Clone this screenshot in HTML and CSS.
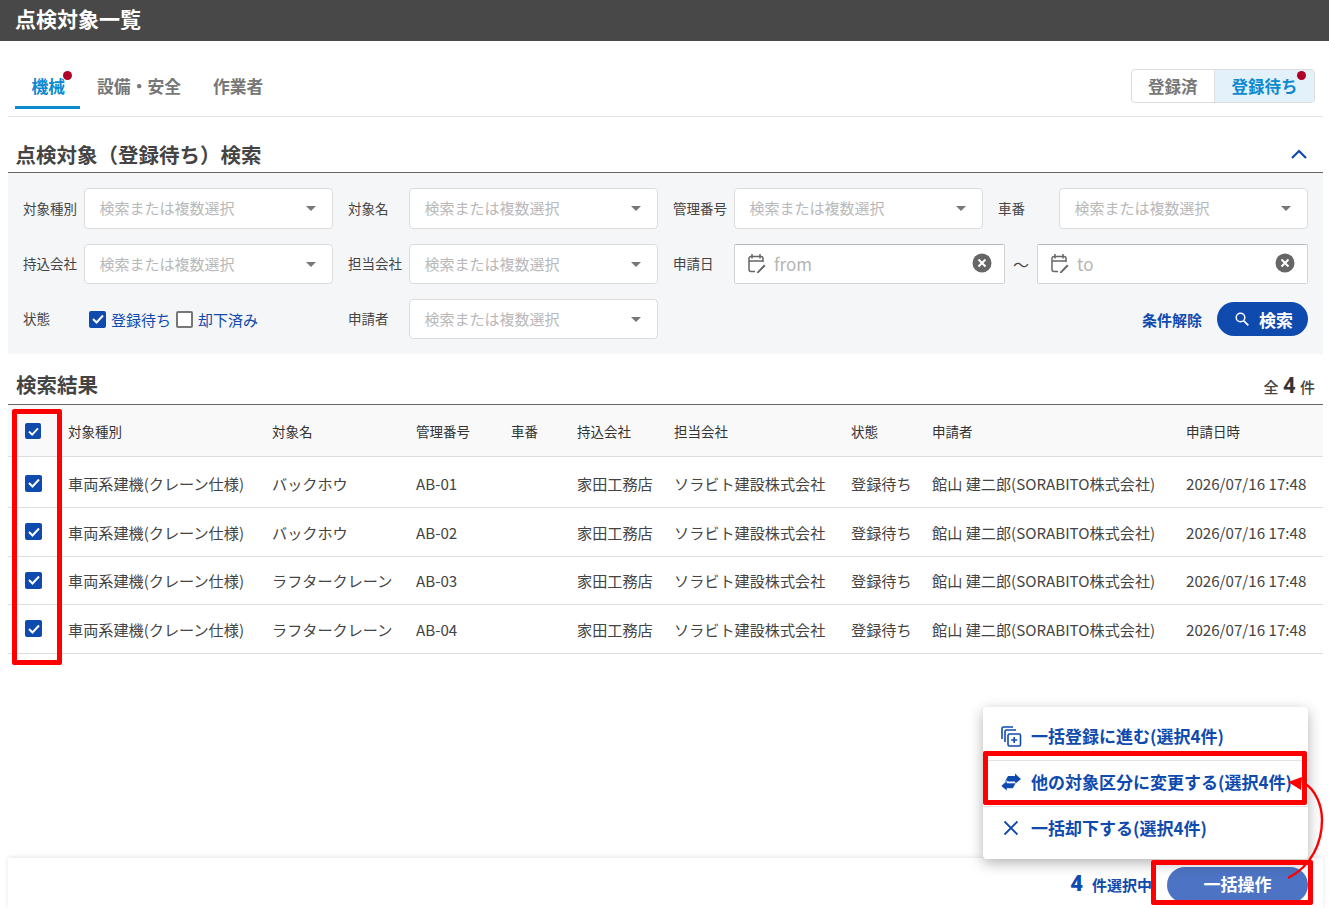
FILE: index.html
```html
<!DOCTYPE html>
<html lang="ja">
<head>
    <meta charset="UTF-8">
    <meta name="viewport" content="width=device-width, initial-scale=1.0">
    <title>点検対象一覧</title>
    <link rel="stylesheet" href="styles.css">
</head>
<body>
    <header class="page-header">点検対象一覧</header>

    <main class="content">
        <div class="tabs-row">
            <nav class="tabs">
                <a class="tab tab-active">機械<span class="dot dot-tab"></span></a>
                <a class="tab">設備・安全</a>
                <a class="tab">作業者</a>
            </nav>
            <div class="segment">
                <span class="segment-item">登録済</span>
                <span class="segment-item segment-active">登録待ち<span class="dot dot-segment"></span></span>
            </div>
        </div>

        <div class="section-head">
            <h2>点検対象（登録待ち）検索</h2>
            <svg class="chevron" width="18" height="10" viewBox="0 0 18 10"><path d="M2 9l7-7 7 7" fill="none" stroke="#0f4aaf" stroke-width="2.2"/></svg>
        </div>

        <section class="filters">
            <div class="field"><label>対象種別</label><div class="select">検索または複数選択<i class="caret"></i></div></div>
            <div class="field"><label>対象名</label><div class="select">検索または複数選択<i class="caret"></i></div></div>
            <div class="field"><label>管理番号</label><div class="select">検索または複数選択<i class="caret"></i></div></div>
            <div class="field"><label>車番</label><div class="select">検索または複数選択<i class="caret"></i></div></div>

            <div class="field"><label>持込会社</label><div class="select">検索または複数選択<i class="caret"></i></div></div>
            <div class="field"><label>担当会社</label><div class="select">検索または複数選択<i class="caret"></i></div></div>
            <div class="field field-wide">
                <label>申請日</label>
                <div class="date">
                    <svg class="cal" width="20" height="21" viewBox="0 0 20 21"><path d="M5 1v4.500M13 1v4.500M8 18.500H4a2 2 0 0 1-2-2V5.500a2 2 0 0 1 2-2h10a2 2 0 0 1 2 2V9M2 8h14" fill="none" stroke="#666" stroke-width="1.5"/><path d="M10 19l7-7.500 1.500 1.500-7 7H10z" fill="#666"/></svg>
                    <span class="date-text">from</span>
                    <svg class="clear" width="20" height="20" viewBox="0 0 20 20"><circle cx="10" cy="10" r="9.5" fill="#666"/><path d="M6.500 6.500l7 7M13.500 6.500l-7 7" stroke="#fff" stroke-width="2"/></svg>
                </div>
                <span class="tilde">〜</span>
                <div class="date">
                    <svg class="cal" width="20" height="21" viewBox="0 0 20 21"><path d="M5 1v4.500M13 1v4.500M8 18.500H4a2 2 0 0 1-2-2V5.500a2 2 0 0 1 2-2h10a2 2 0 0 1 2 2V9M2 8h14" fill="none" stroke="#666" stroke-width="1.5"/><path d="M10 19l7-7.500 1.500 1.500-7 7H10z" fill="#666"/></svg>
                    <span class="date-text">to</span>
                    <svg class="clear" width="20" height="20" viewBox="0 0 20 20"><circle cx="10" cy="10" r="9.5" fill="#666"/><path d="M6.500 6.500l7 7M13.500 6.500l-7 7" stroke="#fff" stroke-width="2"/></svg>
                </div>
            </div>

            <div class="field">
                <label>状態</label>
                <div class="checks">
                    <span class="check-item"><span class="box box-on"><svg width="12" height="10" viewBox="0 0 12 10"><path d="M1 5l3.500 3.500L11 1.500" fill="none" stroke="#fff" stroke-width="2"/></svg></span>登録待ち</span>
                    <span class="check-item"><span class="box box-off"></span>却下済み</span>
                </div>
            </div>
            <div class="field"><label>申請者</label><div class="select">検索または複数選択<i class="caret"></i></div></div>
            <div class="filter-actions">
                <a class="reset">条件解除</a>
                <button class="search-btn">
                    <svg width="16" height="16" viewBox="0 0 16 16"><circle cx="6.500" cy="6.500" r="4.300" fill="none" stroke="#fff" stroke-width="1.5"/><path d="M9.800 9.800l4.500 4.500" stroke="#fff" stroke-width="1.8"/></svg>
                    検索
                </button>
            </div>
        </section>

        <div class="result-head">
            <h2>検索結果</h2>
            <div class="total">全 <b>4</b> 件</div>
        </div>

        <table class="result-table">
            <colgroup>
                <col class="c-check"><col class="c-type"><col class="c-name"><col class="c-no"><col class="c-car">
                <col class="c-bring"><col class="c-owner"><col class="c-state"><col class="c-user"><col class="c-date">
            </colgroup>
            <thead>
                <tr>
                    <th class="check-cell"><span class="box box-on box-small"><svg width="11" height="9" viewBox="0 0 12 10"><path d="M1 5l3.500 3.500L11 1.500" fill="none" stroke="#fff" stroke-width="2"/></svg></span></th>
                    <th>対象種別</th><th>対象名</th><th>管理番号</th><th>車番</th><th>持込会社</th><th>担当会社</th><th>状態</th><th>申請者</th><th>申請日時</th>
                </tr>
            </thead>
            <tbody>
                <tr class="row-first">
                    <td class="check-cell"><span class="box box-on"><svg width="12" height="10" viewBox="0 0 12 10"><path d="M1 5l3.500 3.500L11 1.500" fill="none" stroke="#fff" stroke-width="2"/></svg></span></td>
                    <td>車両系建機(クレーン仕様)</td><td>バックホウ</td><td>AB-01</td><td></td><td>家田工務店</td><td>ソラビト建設株式会社</td><td>登録待ち</td><td>館山 建二郎(SORABITO株式会社)</td><td>2026/07/16 17:48</td>
                </tr>
                <tr>
                    <td class="check-cell"><span class="box box-on"><svg width="12" height="10" viewBox="0 0 12 10"><path d="M1 5l3.500 3.500L11 1.500" fill="none" stroke="#fff" stroke-width="2"/></svg></span></td>
                    <td>車両系建機(クレーン仕様)</td><td>バックホウ</td><td>AB-02</td><td></td><td>家田工務店</td><td>ソラビト建設株式会社</td><td>登録待ち</td><td>館山 建二郎(SORABITO株式会社)</td><td>2026/07/16 17:48</td>
                </tr>
                <tr>
                    <td class="check-cell"><span class="box box-on"><svg width="12" height="10" viewBox="0 0 12 10"><path d="M1 5l3.500 3.500L11 1.500" fill="none" stroke="#fff" stroke-width="2"/></svg></span></td>
                    <td>車両系建機(クレーン仕様)</td><td>ラフタークレーン</td><td>AB-03</td><td></td><td>家田工務店</td><td>ソラビト建設株式会社</td><td>登録待ち</td><td>館山 建二郎(SORABITO株式会社)</td><td>2026/07/16 17:48</td>
                </tr>
                <tr>
                    <td class="check-cell"><span class="box box-on"><svg width="12" height="10" viewBox="0 0 12 10"><path d="M1 5l3.500 3.500L11 1.500" fill="none" stroke="#fff" stroke-width="2"/></svg></span></td>
                    <td>車両系建機(クレーン仕様)</td><td>ラフタークレーン</td><td>AB-04</td><td></td><td>家田工務店</td><td>ソラビト建設株式会社</td><td>登録待ち</td><td>館山 建二郎(SORABITO株式会社)</td><td>2026/07/16 17:48</td>
                </tr>
            </tbody>
        </table>
    </main>

    <footer class="bottom-bar">
        <span class="selected"><b>4</b>件選択中</span>
        <button class="bulk-btn">一括操作</button>

        <div class="bulk-menu">
            <div class="menu-item">
                <svg width="22" height="22" viewBox="0 0 22 22"><path d="M2 14V3.500A1.500 1.500 0 0 1 3.500 2H13M5 17V6.500A1.500 1.500 0 0 1 6.500 5H16" fill="none" stroke="#0f4aaf" stroke-width="1.6"/><rect x="8" y="9" width="12.500" height="12" rx="1.5" fill="none" stroke="#0f4aaf" stroke-width="1.6"/><path d="M14.200 12v6M11.200 15h6" stroke="#0f4aaf" stroke-width="1.6"/></svg>
                一括登録に進む(選択4件)
            </div>
            <div class="menu-item">
                <svg width="22" height="22" viewBox="0 0 22 22"><path d="M8 5h7V2.500L21 8l-6 5v-2.500H5z" fill="#0f4aaf"/><path d="M16 12H7V9.500L1 15l6 5v-2.500h6z" fill="#0f4aaf" stroke="#fff" stroke-width="0.6"/></svg>
                他の対象区分に変更する(選択4件)
            </div>
            <div class="menu-item">
                <svg width="22" height="22" viewBox="0 0 22 22"><path d="M4.500 4.500l13 13M17.500 4.500l-13 13" stroke="#0f4aaf" stroke-width="1.8"/></svg>
                一括却下する(選択4件)
            </div>
        </div>
    </footer>

    <!-- annotations drawn over the screen -->
    <div class="mark mark-checks"></div>
    <div class="mark mark-menu"></div>
    <div class="mark mark-bulk"></div>
    <svg class="mark-arrow" width="50" height="110" viewBox="0 0 50 110">
        <path d="M20 7C32 14 38 30 38 44C38 66 28 90 4 102" fill="none" stroke="#f00" stroke-width="2.4"/>
        <path d="M4 6L18 1 17 14z" fill="#f00"/>
    </svg>
</body>
</html>
```

FILE: styles.css
```css
html, body {
    height: 100%;
}
body {
    margin: 0;
    display: flex;
    flex-direction: column;
    height: 908px;
    overflow: hidden;
    position: relative;
    background: #fff;
    color: #444;
    font-family: "Noto Sans CJK JP", "Noto Sans", sans-serif;
    font-size: 15.15px;
}
h2 {
    margin: 0;
    font-size: 20.5px;
    font-weight: 700;
    color: #444;
}
.page-header {
    height: 41px;
    line-height: 36px;
    padding-left: 15px;
    background: #484848;
    color: #fff;
    font-size: 21px;
    font-weight: 700;
}
.content {
    margin: 0 6px 0 8px;
}

/* tabs */
.tabs-row {
    height: 75px;
    display: flex;
    justify-content: space-between;
    border-bottom: 1px solid #e2e2e2;
}
.tabs {
    display: flex;
    margin-left: 7px;
    padding-top: 28px;
}
.tab {
    position: relative;
    height: 37px;
    line-height: 35px;
    padding: 0 15.5px 0 16.5px;
    font-size: 16.8px;
    font-weight: 700;
    color: #777;
}
.tab-active {
    color: #0a8ad0;
    border-bottom: 3px solid #0a8ad0;
    padding-right: 14.5px;
    margin-right: 1px;
}
.dot {
    position: absolute;
    width: 9px;
    height: 9px;
    border-radius: 50%;
    background: #b00028;
}
.dot-tab {
    top: 2px;
    right: 8px;
}
.segment {
    display: flex;
    height: 32px;
    margin: 28px 8px 0 0;
    border: 1px solid #ddd;
    border-radius: 4px;
    overflow: hidden;
}
.segment-item {
    position: relative;
    line-height: 33px;
    padding: 0 16.5px;
    font-size: 16.5px;
    font-weight: 700;
    color: #777;
}
.segment-active {
    background: #e2f1fa;
    color: #0a8ad0;
    border-left: 1px solid #ddd;
}
.dot-segment {
    top: 1px;
    right: 8px;
}

/* search */
.section-head {
    height: 55px;
    display: flex;
    justify-content: space-between;
    align-items: flex-end;
    padding: 0 15px 0 7.5px;
    border-bottom: 1px solid #666;
}
.section-head h2 {
    line-height: 36px;
}
.chevron {
    margin-bottom: 13px;
}
.filters {
    display: grid;
    grid-template-columns: repeat(4, 310px);
    grid-template-rows: 41px 40px 40px;
    gap: 15px;
    padding: 15px;
    background: #f5f6f8;
}
.field {
    display: flex;
    align-items: center;
}
.field label {
    width: 61px;
    flex: none;
    padding-bottom: 2px;
    font-size: 13.5px;
    white-space: nowrap;
}
.select {
    flex: 1;
    height: 100%;
    box-sizing: border-box;
    display: flex;
    align-items: center;
    justify-content: space-between;
    padding: 0 16px 2px 14.5px;
    background: #fff;
    border: 1px solid #dcdcdc;
    border-radius: 4px;
    color: #b8b8b8;
    font-size: 15px;
}
.caret {
    width: 0;
    height: 0;
    margin-top: 2px;
    border-left: 5px solid transparent;
    border-right: 5px solid transparent;
    border-top: 5px solid #777;
}
.field-wide {
    grid-column: span 2;
}
.date {
    flex: none;
    width: 271px;
    height: 40px;
    box-sizing: border-box;
    display: flex;
    align-items: center;
    padding: 0 12px 2px 12px;
    background: #fff;
    border: 1px solid #d4d4d4;
    border-top-color: #bbb;
    border-radius: 2px;
}
.date-text {
    flex: 1;
    margin-left: 7px;
    padding-top: 1px;
    color: #b5b5b5;
    font-size: 17px;
}
.tilde {
    width: 32px;
    text-align: center;
    color: #444;
    font-size: 16px;
}
.checks {
    display: flex;
    gap: 5px;
    margin-left: 5px;
}
.check-item {
    display: flex;
    align-items: center;
    gap: 5px;
    color: #0f4aaf;
    font-size: 15px;
}
.box {
    display: inline-flex;
    align-items: center;
    justify-content: center;
    width: 17px;
    height: 17px;
    box-sizing: border-box;
    border-radius: 2px;
}
.box-on {
    background: #0f4aaf;
}
.box-off {
    background: #fff;
    border: 2px solid #777;
}
.box-small {
    width: 16px;
    height: 16px;
}
.filter-actions {
    grid-column: span 2;
    display: flex;
    justify-content: flex-end;
    align-items: center;
    gap: 15px;
}
.reset {
    color: #0f4aaf;
    font-size: 15px;
    font-weight: 700;
}
.search-btn {
    width: 91px;
    height: 34px;
    display: flex;
    align-items: center;
    justify-content: center;
    gap: 9px;
    padding: 0 0 0 2px;
    border: none;
    border-radius: 17px;
    background: #0f4aaf;
    color: #fff;
    font-family: inherit;
    font-size: 17px;
    font-weight: 700;
}

/* results */
.result-head {
    height: 50px;
    display: flex;
    justify-content: space-between;
    align-items: flex-end;
    padding: 0 8px;
    border-bottom: 1px solid #666;
}
.result-head h2 {
    line-height: 40px;
}
.total {
    line-height: 34px;
    font-size: 15px;
    font-weight: 500;
}
.total b {
    margin: 0 1px;
    font-size: 22px;
    font-family: "Roboto", sans-serif;
    color: #333;
}
.result-table {
    width: 1315px;
    table-layout: fixed;
    border-collapse: collapse;
}
.c-check { width: 60px; }
.c-type { width: 204px; }
.c-name { width: 144px; }
.c-no { width: 95px; }
.c-car { width: 66px; }
.c-bring { width: 97px; }
.c-owner { width: 177px; }
.c-state { width: 81px; }
.c-user { width: 254px; }
.c-date { width: 137px; }
.result-table th {
    height: 51px;
    padding: 2px 0 0;
    background: #f9f9fa;
    border-bottom: 1px solid #ddd;
    text-align: left;
    font-size: 13.5px;
    font-weight: 400;
    color: #333;
    box-sizing: border-box;
}
.result-table td {
    height: 48px;
    padding: 0;
    border-bottom: 1px solid #ddd;
    white-space: nowrap;
    box-sizing: border-box;
}
.result-table tr:nth-child(even) td {
    height: 49px;
}
.result-table .row-first td {
    height: 51px;
    padding-top: 3px;
}
.result-table .check-cell {
    padding-left: 17px;
}
.check-cell .box {
    display: flex;
}

/* bottom */
.bottom-bar {
    position: relative;
    margin: auto 6px 0 8px;
    height: 50px;
    box-sizing: border-box;
    display: flex;
    justify-content: flex-end;
    align-items: center;
    gap: 15px;
    padding: 4px 15px 0 0;
    background: #fff;
    box-shadow: 0 -1px 5px rgba(0, 0, 0, 0.1);
}
.selected {
    padding-bottom: 3px;
    color: #0f4aaf;
    font-size: 15px;
    font-weight: 700;
}
.selected b {
    margin-right: 9px;
    font-size: 22px;
    font-family: "Roboto", sans-serif;
}
.bulk-btn {
    width: 141px;
    height: 36px;
    padding: 0 0 3px;
    border: none;
    border-radius: 18px;
    background: #4d74c4;
    color: #fff;
    font-family: inherit;
    font-size: 17px;
    font-weight: 700;
}
.bulk-menu {
    position: absolute;
    right: 15px;
    bottom: 49px;
    width: 325px;
    box-sizing: border-box;
    padding: 7px 0;
    background: #fff;
    border-radius: 4px;
    box-shadow: 0 4px 14px rgba(0, 0, 0, 0.3);
}
.menu-item {
    height: 46px;
    box-sizing: border-box;
    display: flex;
    align-items: center;
    gap: 9px;
    padding: 0 0 3px 17px;
    color: #0f4aaf;
    font-size: 17px;
    font-weight: 700;
    white-space: nowrap;
}
.menu-item + .menu-item {
    border-top: 1px solid #e2e2e2;
    padding-bottom: 4px;
}

/* red annotations */
.mark {
    position: absolute;
    box-sizing: border-box;
    border: 5px solid #f00;
    border-radius: 2px;
}
.mark-checks {
    left: 12px;
    top: 409px;
    width: 50px;
    height: 256px;
}
.mark-menu {
    left: 983px;
    top: 751px;
    width: 324px;
    height: 54px;
}
.mark-bulk {
    left: 1151px;
    top: 860px;
    width: 162px;
    height: 45px;
}
.mark-arrow {
    position: absolute;
    left: 1284px;
    top: 776px;
}
```
